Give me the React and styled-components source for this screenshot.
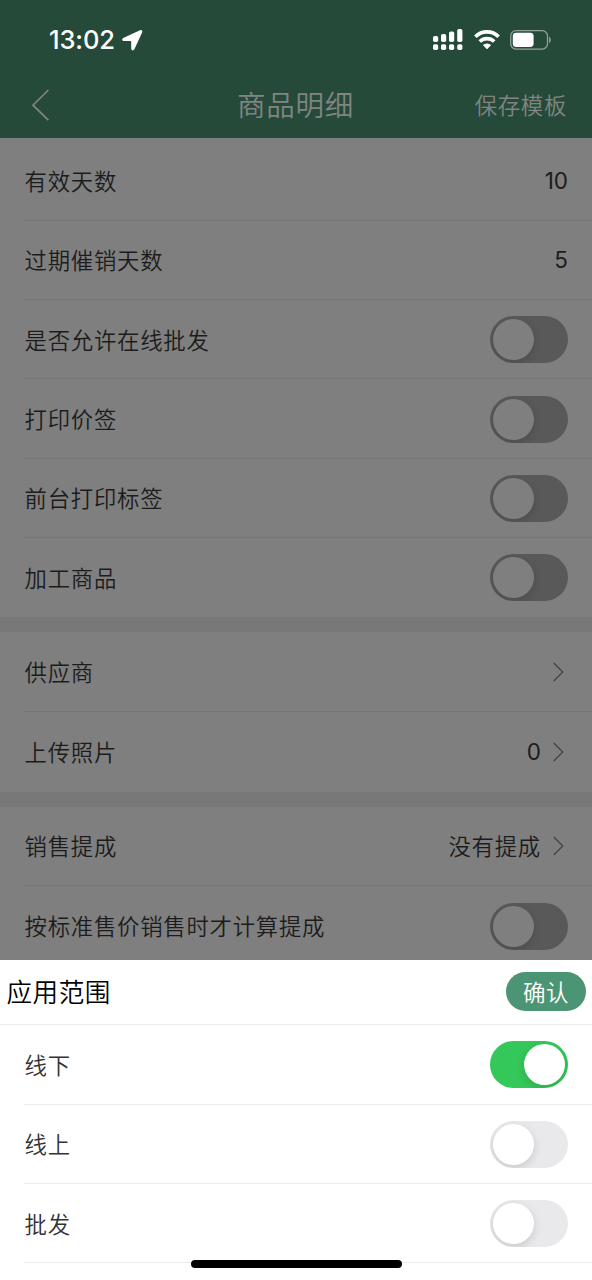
import React from "react";
import styled, { createGlobalStyle } from "styled-components";

const GlobalStyle = createGlobalStyle`
  * { box-sizing: border-box; }
  body {
    margin: 0;
    font-family: Inter, "Noto Sans CJK SC", sans-serif;
    background: #fff;
  }
`;

const Screen = styled.div`
  width: 592px;
  height: 1280px;
  display: flex;
  flex-direction: column;
  overflow: hidden;
  position: relative;
  background: #7f7f7f;
`;

const Header = styled.header`
  height: 138px;
  flex: none;
  background: #264a3a;
`;

const StatusBar = styled.div`
  height: 72px;
  padding: 8px 40px 0 49px;
  display: flex;
  align-items: center;
  justify-content: space-between;
  color: #fff;
`;

const Clock = styled.div`
  display: flex;
  align-items: center;
  gap: 7px;
  font-size: 25.5px;
  font-weight: 550;
  letter-spacing: -0.1px;
  line-height: 30px;
  height: 30px;
`;

const StatusIcons = styled.div`
  display: flex;
  align-items: center;
  gap: 10.5px;
  svg { display: block; }
`;

const NavBar = styled.div`
  height: 66px;
  padding: 0 25px 0 31px;
  display: grid;
  grid-template-columns: 1fr auto 1fr;
  align-items: center;
  color: #808582;
  svg { display: block; }
`;

const Title = styled.div`
  font-family: "Noto Sans CJK SC", sans-serif;
  font-size: 28.5px;
  font-weight: 350;
  letter-spacing: 0.8px;
  margin-right: 7px;
  padding-bottom: 2px;
  line-height: 40px;
`;

const NavAction = styled.div`
  font-family: "Noto Sans CJK SC", sans-serif;
  font-size: 22.4px;
  font-weight: 350;
  letter-spacing: 0.7px;
  line-height: 32px;
  padding-bottom: 2px;
  text-align: right;
`;

const Content = styled.main`
  height: 822px;
  flex: none;
  overflow: hidden;
  background: #787878;
  display: flex;
  flex-direction: column;
  gap: 14.6px;
`;

const Group = styled.section`
  flex: none;
  padding-top: ${(p) => p.$top || 0}px;
  background: #7f7f7f;
`;

const Row = styled.div`
  height: ${(p) => p.$height || 79.35}px;
  margin-left: 24px;
  padding: 1px ${(p) => p.$right || 24}px 0 0.5px;
  display: flex;
  align-items: center;
  justify-content: space-between;
  border-bottom: 1px solid ${(p) => (p.$last ? "transparent" : p.$light ? "#ebebeb" : "#767676")};
  color: ${(p) => (p.$light ? "#333" : "#1c1c1c")};
`;

const Label = styled.span`
  font-family: "Noto Sans CJK SC", sans-serif;
  font-size: 22.4px;
  font-weight: 350;
  letter-spacing: 0.74px;
  line-height: 32px;
  padding-bottom: 2px;
`;

const Value = styled.span`
  font-size: 22.5px;
  font-weight: 400;
  line-height: 32px;
`;

const Trailing = styled.div`
  display: flex;
  align-items: center;
  gap: 12px;
  svg { display: block; }
`;

const Track = styled.div`
  width: 78px;
  height: 47px;
  flex: none;
  padding: 3px;
  border-radius: 24px;
  display: flex;
  overflow: hidden;
  justify-content: ${(p) => (p.$on ? "flex-end" : "flex-start")};
  background: ${(p) => (p.$on ? "#34c759" : p.$light ? "#e9e9eb" : "#595959")};
`;

const Knob = styled.div`
  width: 41px;
  height: 41px;
  border-radius: 50%;
  background: ${(p) => (p.$light ? "#fff" : "#7f7f7f")};
  box-shadow: 0 3px 9px rgba(0, 0, 0, 0.14);
`;

const Sheet = styled.section`
  height: 320px;
  flex: none;
  background: #fff;
`;

const SheetHeader = styled.div`
  height: 65px;
  padding: 0 6px 1px 6.5px;
  display: flex;
  align-items: center;
  justify-content: space-between;
  border-bottom: 1px solid #ebebeb;
`;

const SheetTitle = styled.h2`
  margin: 0;
  padding-bottom: 2px;
  font-family: "Noto Sans CJK SC", sans-serif;
  font-size: 25.6px;
  font-weight: 350;
  letter-spacing: 0.5px;
  line-height: 38px;
  color: #000;
`;

const Confirm = styled.button`
  width: 80px;
  height: 39px;
  padding: 0 0 2px;
  border: 0;
  border-radius: 20px;
  background: #4c9574;
  color: #fff;
  font-family: "Noto Sans CJK SC", sans-serif;
  font-size: 22.5px;
  font-weight: 350;
  letter-spacing: 0.4px;
  line-height: 34px;
`;

const HomeIndicator = styled.div`
  position: absolute;
  left: 191px;
  bottom: 12px;
  width: 211px;
  height: 8px;
  border-radius: 4px;
  background: #000;
`;

function Switch({ on, light }) {
  return (
    <Track $on={on} $light={light}>
      <Knob $light={light} />
    </Track>
  );
}

function Chevron() {
  return (
    <svg width="11" height="20" viewBox="0 0 11 20" fill="none" stroke="#414141" strokeWidth="1.2">
      <path d="M.8 1 9.8 10 .8 19" />
    </svg>
  );
}

function LocationArrow() {
  return (
    <svg width="21" height="21" viewBox="0 0 21 21" fill="#fff">
      <path d="M18 .3 1.2 8C-.4 8.8-.1 11.1 1.8 11.1h6.6c.6 0 .8.3.8.8v6.7c0 2.1 2.4 2.5 3.2.7L20.1 2.5C20.8.8 19.6-.4 18 .3Z" />
    </svg>
  );
}

function DualSignal() {
  const bars = [[0, 7, 6], [8, 5, 8], [16, 2.4, 10.6], [24.2, 0, 13]];
  return (
    <svg width="30" height="22" viewBox="0 0 30 22" fill="#fff">
      {bars.map(([x, y, h]) => (
        <g key={x}>
          <rect x={x} y={y} width="5.2" height={h} rx="1.8" />
          <rect x={x} y="15.2" width="5.2" height="5.8" rx="1.7" />
        </g>
      ))}
    </svg>
  );
}

function Wifi() {
  return (
    <svg width="26" height="20" viewBox="0 0 26 20" fill="none" stroke="#fff" strokeWidth="3.7">
      <path d="M1.4 6.7a16.5 16.5 0 0 1 23.2 0" />
      <path d="M5.8 11.5a10.3 10.3 0 0 1 14.4 0" />
      <path d="M8.9 15.1a6 6 0 0 1 8.2 0L13.6 18.8a.9.9 0 0 1-1.2 0Z" fill="#fff" stroke="none" />
    </svg>
  );
}

function Battery() {
  return (
    <svg width="42" height="20" viewBox="0 0 42 20">
      <rect x=".7" y=".7" width="36.8" height="18.4" rx="5.3" fill="none" stroke="#8fa297" strokeWidth="1.3" />
      <rect x="2.8" y="2.8" width="20.8" height="14.2" rx="3.4" fill="#fff" />
      <path d="M39.1 6.8c2.3 1 2.3 5.3 0 6.3Z" fill="#8fa297" />
    </svg>
  );
}

export default function App() {
  return (
    <>
      <GlobalStyle />
      <Screen>
        <Header>
          <StatusBar>
            <Clock>
              <span>13:02</span>
              <LocationArrow />
            </Clock>
            <StatusIcons>
              <DualSignal />
              <Wifi />
              <Battery />
            </StatusIcons>
          </StatusBar>
          <NavBar>
            <svg width="19" height="32" viewBox="0 0 19 32" fill="none" stroke="currentColor" strokeWidth="1.7">
              <path d="M17.4 1 2 16.2 17.4 31.2" />
            </svg>
            <Title>商品明细</Title>
            <NavAction>保存模板</NavAction>
          </NavBar>
        </Header>
        <Content>
          <Group $top={3.4}>
            <Row><Label>有效天数</Label><Value>10</Value></Row>
            <Row><Label>过期催销天数</Label><Value>5</Value></Row>
            <Row><Label>是否允许在线批发</Label><Switch /></Row>
            <Row><Label>打印价签</Label><Switch /></Row>
            <Row><Label>前台打印标签</Label><Switch /></Row>
            <Row $last><Label>加工商品</Label><Switch /></Row>
          </Group>
          <Group>
            <Row $height={80} $right={28}><Label>供应商</Label><Chevron /></Row>
            <Row $height={80} $right={28} $last>
              <Label>上传照片</Label>
              <Trailing><Value>0</Value><Chevron /></Trailing>
            </Row>
          </Group>
          <Group>
            <Row $height={79.7} $right={28}>
              <Label>销售提成</Label>
              <Trailing><Label>没有提成</Label><Chevron /></Trailing>
            </Row>
            <Row><Label>按标准售价销售时才计算提成</Label><Switch /></Row>
          </Group>
        </Content>
        <Sheet>
          <SheetHeader>
            <SheetTitle>应用范围</SheetTitle>
            <Confirm>确认</Confirm>
          </SheetHeader>
          <Row $light $height={79.6}><Label>线下</Label><Switch on light /></Row>
          <Row $light><Label>线上</Label><Switch light /></Row>
          <Row $light><Label>批发</Label><Switch light /></Row>
        </Sheet>
        <HomeIndicator />
      </Screen>
    </>
  );
}
